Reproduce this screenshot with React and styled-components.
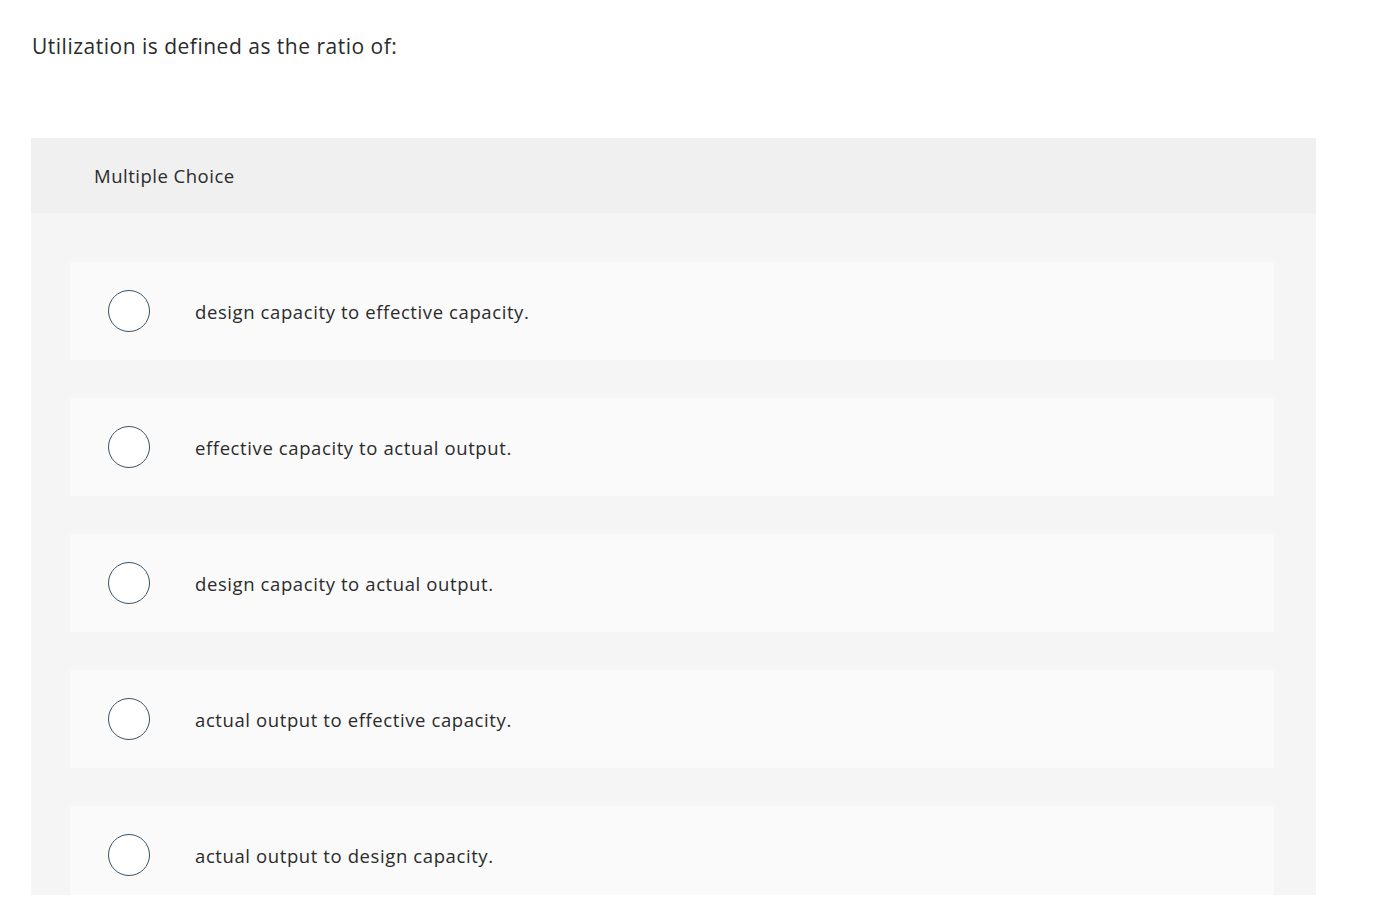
import React from "react";
import styled, { createGlobalStyle } from "styled-components";

const GlobalStyle = createGlobalStyle`
  html, body {
    margin: 0;
    padding: 0;
    background: #ffffff;
  }
  body {
    font-family: "Open Sans", "Liberation Sans", Arial, sans-serif;
    color: #2b2b2b;
  }
`;

const Page = styled.div`
  padding: 31px 58px 0 31px;
  height: 895px;
  box-sizing: border-box;
  display: flex;
  flex-direction: column;
  overflow: hidden;
`;

const Question = styled.p`
  margin: 0 0 0 1px;
  font-size: 21px;
  line-height: 30px;
  letter-spacing: 0.5px;
  color: #2b2b2b;
`;

const Card = styled.section`
  margin-top: 77px;
  flex: 1;
  background: #f5f5f5;
  overflow: hidden;
`;

const CardHeader = styled.header`
  height: 75px;
  background: #f0f0f0;
  display: flex;
  align-items: center;
  padding-left: 63px;
  font-size: 18.5px;
  letter-spacing: 0.5px;
  color: #2b2b2b;
`;

const Options = styled.div`
  display: flex;
  flex-direction: column;
  gap: 38px;
  padding: 49px 42px 0 39px;
`;

const Option = styled.label`
  height: 98px;
  background: #fafafa;
  border-radius: 3px;
  display: flex;
  align-items: center;
  padding-left: 38px;
  cursor: pointer;
`;

const Radio = styled.span`
  width: 40px;
  height: 40px;
  border-radius: 50%;
  border: 1.5px solid #3b5468;
  background: #ffffff;
  flex-shrink: 0;
`;

const OptionText = styled.span`
  margin-left: 45px;
  font-size: 18.5px;
  letter-spacing: 0.6px;
  color: #2b2b2b;
`;

const choices = [
  "design capacity to effective capacity.",
  "effective capacity to actual output.",
  "design capacity to actual output.",
  "actual output to effective capacity.",
  "actual output to design capacity.",
];

export default function App() {
  return (
    <>
      <GlobalStyle />
      <Page>
        <Question>Utilization is defined as the ratio of:</Question>
        <Card>
          <CardHeader>Multiple Choice</CardHeader>
          <Options>
            {choices.map((c) => (
              <Option key={c}>
                <Radio />
                <OptionText>{c}</OptionText>
              </Option>
            ))}
          </Options>
        </Card>
      </Page>
    </>
  );
}
